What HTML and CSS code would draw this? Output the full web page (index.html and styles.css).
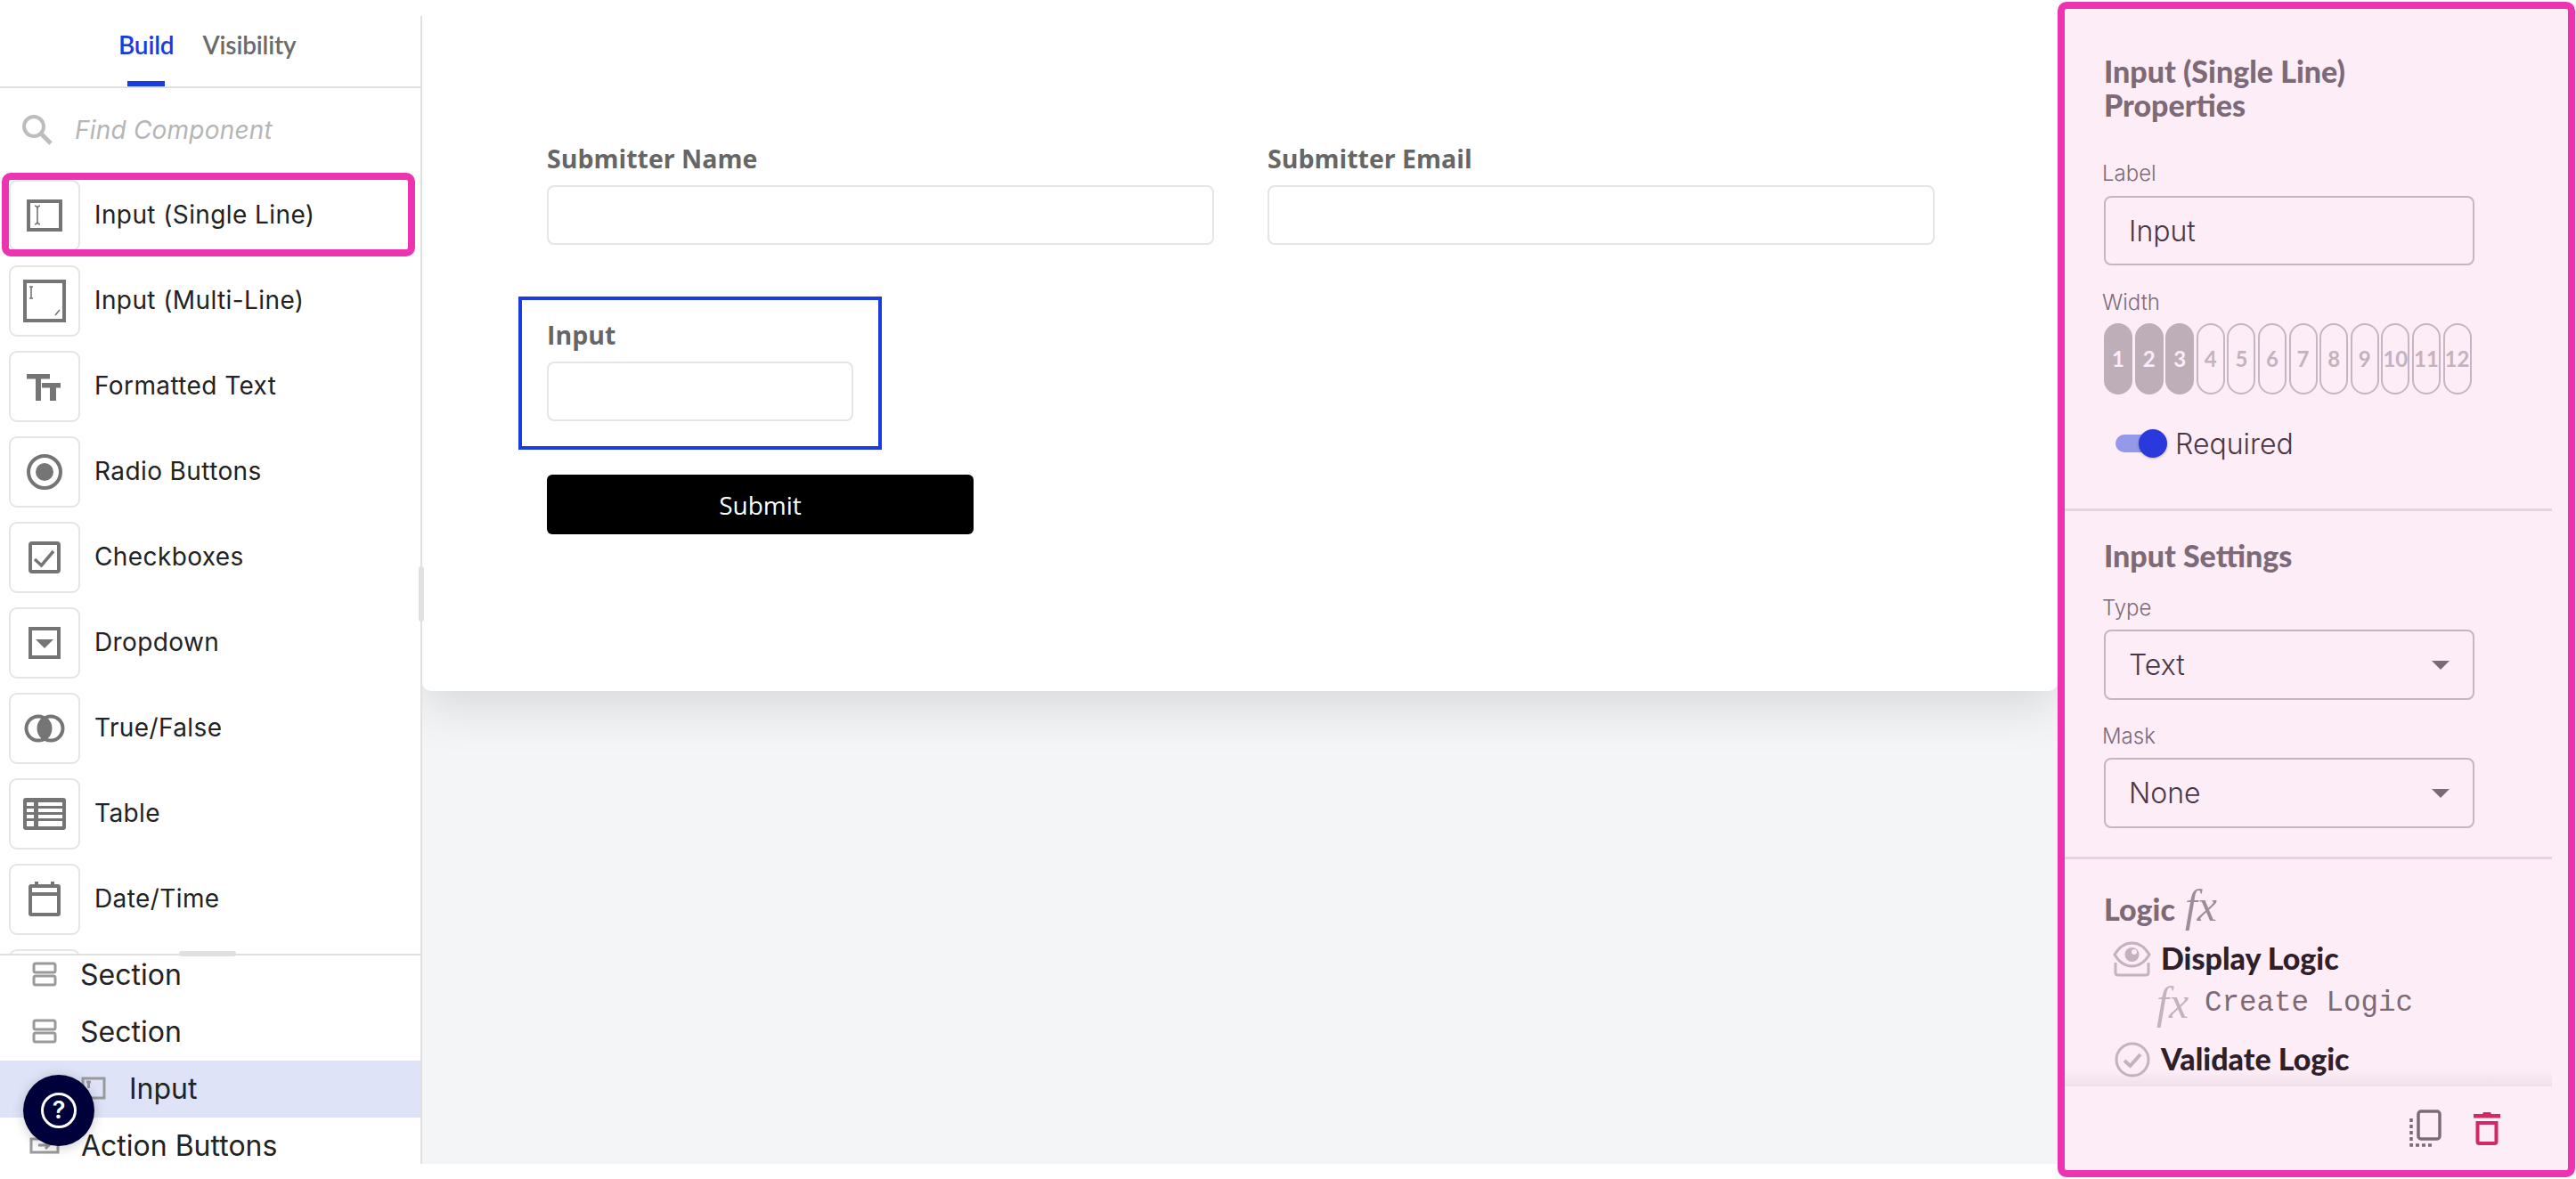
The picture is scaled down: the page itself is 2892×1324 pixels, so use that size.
FILE: index.html
```html
<!DOCTYPE html>
<html lang="en">
<head>
  <meta charset="UTF-8">
  <title>Form Builder</title>
  <link rel="stylesheet" href="styles.css">
</head>
<body>
  <div class="app">

    <!-- Left sidebar -->
    <aside class="sidebar">
      <div class="tabs">
        <a class="tab active">Build</a>
        <a class="tab">Visibility</a>
      </div>
      <div class="search">
        <svg class="search-icon" width="36" height="36" viewBox="0 0 36 36"><circle cx="14" cy="14" r="11" fill="none" stroke="#bdbdbd" stroke-width="4"/><path d="M22 22 L33 33" stroke="#bdbdbd" stroke-width="5"/></svg>
        <span class="search-text">Find Component</span>
      </div>

      <div class="components">
        <div class="component">
          <div class="icon-box"><svg viewBox="2 2 76 76"><rect x="22" y="24" width="36" height="32" class="ic-line"/><path d="M29 29 Q32 29.5 32 32 V47 Q32 49.5 29 50 M35 29 Q32 29.5 32 32 M32 47 Q32 49.5 35 50" class="ic-thin"/></svg></div>
          <span>Input (Single Line)</span>
        </div>
        <div class="component">
          <div class="icon-box"><svg viewBox="2 2 76 76"><rect x="18" y="18" width="44" height="44" class="ic-line"/><path d="M23 24 H27 M23 37 H27 M25 24 V37 M52 56 L57 50" class="ic-thin"/></svg></div>
          <span>Input (Multi-Line)</span>
        </div>
        <div class="component">
          <div class="icon-box"><svg viewBox="2 2 76 76"><path d="M20 26 H46 V31.5 H36 V56 H30 V31.5 H20 Z M37 36 H58 V41.5 H53 V56 H46 V41.5 H37 Z" class="ic-fill"/></svg></div>
          <span>Formatted Text</span>
        </div>
        <div class="component">
          <div class="icon-box"><svg viewBox="2 2 76 76"><circle cx="40" cy="40" r="18" class="ic-line"/><circle cx="40" cy="40" r="10" class="ic-fill"/></svg></div>
          <span>Radio Buttons</span>
        </div>
        <div class="component">
          <div class="icon-box"><svg viewBox="2 2 76 76"><rect x="24" y="24" width="32" height="32" rx="2" class="ic-line"/><path d="M29 42 L36.5 49 L50 33" class="ic-check"/></svg></div>
          <span>Checkboxes</span>
        </div>
        <div class="component">
          <div class="icon-box"><svg viewBox="2 2 76 76"><rect x="24" y="24" width="32" height="32" class="ic-line"/><path d="M30 36 H50 L40 46 Z" class="ic-fill"/></svg></div>
          <span>Dropdown</span>
        </div>
        <div class="component">
          <div class="icon-box"><svg viewBox="2 2 76 76"><circle cx="33" cy="40" r="13.5" class="ic-line"/><circle cx="47" cy="40" r="13.5" class="ic-line"/><path d="M40 27 A15 15 0 0 1 40 53 A15 15 0 0 1 40 27 Z" class="ic-fill"/></svg></div>
          <span>True/False</span>
        </div>
        <div class="component">
          <div class="icon-box"><svg viewBox="2 2 76 76"><rect x="16" y="22" width="48" height="36" rx="3" class="ic-fill"/><path d="M20 27 H28 V31 H20 Z M33 27 H60 V31 H33 Z M20 34 H28 V38 H20 Z M33 34 H60 V38 H33 Z M20 41 H28 V45 H20 Z M33 41 H60 V45 H33 Z M20 48 H28 V54 H20 Z M33 48 H60 V54 H33 Z" fill="#fff"/></svg></div>
          <span>Table</span>
        </div>
        <div class="component">
          <div class="icon-box"><svg viewBox="2 2 76 76"><rect x="24" y="25" width="32" height="32" rx="1" class="ic-line"/><path d="M22 34 H58 M31 20 V27 M49 20 V27" class="ic-line"/></svg></div>
          <span>Date/Time</span>
        </div>
        <div class="component">
          <div class="icon-box"></div>
        </div>
      </div>

      <!-- Layers tree -->
      <div class="layers">
        <div class="layers-inner">
          <div class="layer">
            <svg width="28" height="28" viewBox="0 0 28 28"><rect x="2" y="2" width="24" height="10" rx="2" class="ly-line"/><rect x="2" y="16" width="24" height="10" rx="2" class="ly-line"/></svg>
            <span>Section</span>
          </div>
          <div class="layer">
            <svg width="28" height="28" viewBox="0 0 28 28"><rect x="2" y="2" width="24" height="10" rx="2" class="ly-line"/><rect x="2" y="16" width="24" height="10" rx="2" class="ly-line"/></svg>
            <span>Section</span>
          </div>
          <div class="layer selected">
            <svg width="28" height="28" viewBox="0 0 28 28"><rect x="2" y="3" width="24" height="22" class="ly-line"/><path d="M6 7 H11 M8.5 7 V14" class="ly-line"/></svg>
            <span>Input</span>
          </div>
          <div class="layer">
            <svg width="34" height="28" viewBox="0 0 34 28"><rect x="2" y="7" width="30" height="15" class="ly-line"/><path d="M10 14 H22 M18 10 L22 14 L18 18" class="ly-line"/></svg>
            <span>Action Buttons</span>
          </div>
        </div>
        <div class="layers-handle"></div>
      </div>

      <div class="sidebar-scroll"></div>
    </aside>

    <!-- Canvas with the form -->
    <main class="canvas">
      <form class="card">
        <div class="form-row">
          <div class="form-field">
            <label>Submitter Name</label>
            <input type="text" class="form-input">
          </div>
          <div class="form-field">
            <label>Submitter Email</label>
            <input type="text" class="form-input">
          </div>
        </div>
        <div class="form-field active-field">
          <label>Input</label>
          <input type="text" class="form-input">
        </div>
        <button type="button" class="submit">Submit</button>
      </form>
    </main>

    <!-- Properties panel -->
    <section class="panel">
      <div class="panel-scroll">
        <div class="panel-section">
          <h2 class="panel-title">Input (Single Line)<br>Properties</h2>
          <div class="prop-label first">Label</div>
          <input type="text" class="prop-input" value="Input">
          <div class="prop-label width">Width</div>
          <div class="pills">
            <span class="pill on">1</span>
            <span class="pill on">2</span>
            <span class="pill on">3</span>
            <span class="pill">4</span>
            <span class="pill">5</span>
            <span class="pill">6</span>
            <span class="pill">7</span>
            <span class="pill">8</span>
            <span class="pill">9</span>
            <span class="pill">10</span>
            <span class="pill">11</span>
            <span class="pill">12</span>
          </div>
          <div class="toggle-row">
            <span class="toggle"><span class="toggle-thumb"></span></span>
            <span class="toggle-text">Required</span>
          </div>
        </div>

        <div class="panel-section settings">
          <h3 class="section-title">Input Settings</h3>
          <div class="prop-label type">Type</div>
          <div class="prop-select"><span>Text</span><i class="caret"></i></div>
          <div class="prop-label mask">Mask</div>
          <div class="prop-select"><span>None</span><i class="caret"></i></div>
        </div>

        <div class="panel-section logic">
          <h3 class="section-title">Logic <span class="fx fx-head">fx</span></h3>
          <div class="logic-row first-logic">
            <svg width="43" height="40" viewBox="0 0 43 40"><path d="M2 15 C8 5 14 2 21.5 2 C29 2 35 5 41 15 C35 25 29 28 21.5 28 C14 28 8 25 2 15 Z" class="lg-line"/><circle cx="21.5" cy="15" r="8" fill="#c4b2be"/><circle cx="24" cy="12" r="3" fill="#fcebf8"/><path d="M3 24 V35 Q3 38 6 38 H37 Q40 38 40 35 V24" class="lg-line"/></svg>
            <span>Display Logic</span>
          </div>
          <div class="create-row"><span class="fx fx-small">fx</span><span class="create-text">Create Logic</span></div>
          <div class="logic-row validate">
            <svg width="40" height="40" viewBox="0 0 40 40"><circle cx="20" cy="20" r="18" class="lg-line"/><path d="M11 21 L17.5 27 L29 14" class="lg-line lg-thick"/></svg>
            <span>Validate Logic</span>
          </div>
          <div class="create-row"><span class="fx fx-small">fx</span></div>
        </div>
      </div>

      <div class="panel-foot">
        <svg width="36" height="42" viewBox="0 0 36 42"><rect x="10" y="2" width="24" height="31" rx="3" fill="none" stroke="#7d6a79" stroke-width="3.5"/><path d="M2 10 V40 H28" fill="none" stroke="#7d6a79" stroke-width="3.5" stroke-dasharray="4 3"/></svg>
        <svg width="30" height="38" viewBox="0 0 30 38"><path d="M0 3 H10 L11 1 H19 L20 3 H30 V7.5 H0 Z" fill="#d02a66"/><path d="M4.5 13 H25.5 V34 Q25.5 36 23.5 36 H6.5 Q4.5 36 4.5 34 Z" fill="none" stroke="#d02a66" stroke-width="4"/></svg>
      </div>
    </section>
  </div>

  <!-- Overlays -->
  <div class="highlight"></div>
  <button class="help"><span class="help-ring">?</span></button>
</body>
</html>
```

FILE: styles.css
```css
* {
  box-sizing: border-box;
}

body {
  margin: 0;
  height: 1324px;
  overflow: hidden;
  background: #fff;
  font-family: Inter, "Liberation Sans", sans-serif;
  color: #222;
}

.app {
  display: flex;
  align-items: flex-start;
  height: 1324px;
}

/* Sidebar */
.sidebar {
  position: relative;
  display: flex;
  flex-direction: column;
  width: 474px;
  height: 1289px;
  margin-top: 18px;
  border-right: 2px solid #e0e0e0;
  background: #fff;
  z-index: 2;
}

.tabs {
  display: flex;
  justify-content: flex-start;
  gap: 32px;
  height: 81px;
  padding-left: 133px;
  border-bottom: 2px solid #e0e0e0;
}

.tab {
  position: relative;
  padding-top: 14px;
  font-family: Lato, sans-serif;
  font-size: 28px;
  font-weight: 600;
  letter-spacing: -0.15px;
  line-height: 36px;
  color: #6b6b6b;
}

.tab.active {
  color: #1a3be0;
}

.tab.active::after {
  content: "";
  position: absolute;
  left: 10px;
  right: 10px;
  bottom: 0;
  height: 6px;
  background: #1a3be0;
}

.search {
  display: flex;
  align-items: center;
  height: 95px;
  padding: 0 0 1px 24px;
}

.search-icon {
  margin-right: 24px;
}

.search-text {
  font-size: 28px;
  font-style: italic;
  letter-spacing: 0.2px;
  color: #b5b5b5;
}

.components {
  display: flex;
  flex-direction: column;
  gap: 16px;
  flex: 1;
  min-height: 0;
  padding: 8px 0 0 10px;
  overflow: hidden;
}

.component {
  display: flex;
  align-items: center;
  gap: 16px;
  flex: none;
  height: 80px;
  font-size: 28px;
  letter-spacing: 0.4px;
  color: #222;
}

.component span {
  margin-bottom: 2px;
}

.icon-box {
  flex: none;
  width: 80px;
  height: 80px;
  border: 2px solid #e5e5e5;
  border-radius: 9px;
}

.icon-box svg {
  display: block;
  width: 76px;
  height: 76px;
}

.ic-line {
  fill: none;
  stroke: #757575;
  stroke-width: 4;
}

.ic-thin {
  fill: none;
  stroke: #757575;
  stroke-width: 1.6;
}

.ic-check {
  fill: none;
  stroke: #757575;
  stroke-width: 3.5;
}

.ic-fill {
  fill: #757575;
}

.layers {
  position: relative;
  flex: none;
  height: 236px;
  border-top: 2px solid #e0e0e0;
}

.layers-inner {
  height: 100%;
  overflow: hidden;
}

.layer {
  display: flex;
  align-items: center;
  height: 64px;
  padding-left: 36px;
  padding-bottom: 2px;
  font-size: 32px;
  color: #222;
}

.layer:first-child {
  margin-top: -10px;
}

.layer svg {
  flex: none;
  margin-right: 26px;
}

.layer.selected {
  padding-left: 91px;
  background: #dfe3f7;
}

.layer:last-child {
  padding-left: 33px;
}

.layer:last-child svg {
  margin-right: 24px;
}

.ly-line {
  fill: none;
  stroke: #9a9a9a;
  stroke-width: 3;
}

.layers-handle {
  position: absolute;
  top: -5px;
  left: 201px;
  width: 64px;
  height: 6px;
  border-radius: 3px;
  background: #e0e0e0;
}

.sidebar-scroll {
  position: absolute;
  top: 618px;
  right: -4px;
  width: 6px;
  height: 62px;
  border-radius: 3px;
  background: #e0e0e0;
}

/* Canvas */
.canvas {
  flex: 1;
  height: 1307px;
  overflow: hidden;
  background: #f4f5f7;
}

.card {
  display: flex;
  flex-direction: column;
  align-items: flex-start;
  height: 776px;
  padding: 160px 0 0 140px;
  border-radius: 0 0 10px 10px;
  background: #fff;
  box-shadow: 0 14px 60px rgba(0, 0, 0, 0.13);
  font-family: "Open Sans", sans-serif;
}

.form-row {
  display: flex;
  gap: 60px;
}

.form-row .form-field {
  width: 749px;
}

.form-field label {
  display: block;
  margin-bottom: 12px;
  font-size: 28.5px;
  font-weight: 700;
  line-height: 36px;
  color: #666;
}

.form-input {
  display: block;
  width: 100%;
  height: 67px;
  border: 2px solid #e5e5e5;
  border-radius: 8px;
  background: #fff;
}

.active-field {
  width: 408px;
  margin: 58px 0 0 -32px;
  padding: 21px 28px 28px;
  border: 4px solid #1a3be0;
}

.submit {
  width: 479px;
  height: 67px;
  margin-top: 28px;
  border: none;
  border-radius: 6px;
  background: #000;
  color: #fff;
  font-family: "Open Sans", sans-serif;
  font-size: 28px;
}

/* Properties panel */
.panel {
  display: flex;
  flex-direction: column;
  flex: none;
  width: 581px;
  height: 1320px;
  margin: 2px 1px 0 0;
  border: 8px solid #ec33b0;
  border-radius: 10px;
  background: #fdedf7;
  color: #7d6a79;
  z-index: 3;
}

.panel-scroll {
  position: relative;
  flex: none;
  height: 1210px;
  margin-right: 18px;
  overflow: hidden;
}

.panel-scroll::after {
  content: "";
  position: absolute;
  left: 0;
  right: 0;
  bottom: 0;
  height: 18px;
  background: linear-gradient(rgba(125, 106, 121, 0), rgba(125, 106, 121, 0.1));
}

.panel-section {
  padding-left: 44px;
}

.panel-title,
.section-title {
  margin: 0;
  font-family: Lato, sans-serif;
  font-size: 34px;
  font-weight: 900;
  line-height: 38px;
  color: #7d6a79;
}

.panel-title {
  padding-top: 51px;
}

.prop-label {
  margin: 0 0 10px -2px;
  font-size: 24px;
  font-weight: 300;
  line-height: 30px;
  color: #7d6a79;
}

.prop-label.first {
  margin-top: 43px;
}

.prop-label.width {
  margin-top: 27px;
}

.prop-label.type {
  margin-top: 25px;
  margin-bottom: 9px;
}

.prop-label.mask {
  margin-top: 26px;
  margin-bottom: 9px;
}

.prop-input,
.prop-select {
  display: flex;
  align-items: center;
  justify-content: space-between;
  width: 416px;
  height: 78px;
  padding: 0 26px;
  border: 2.5px solid #c8b5c3;
  border-radius: 8px;
  background: transparent;
  font-family: Inter, sans-serif;
  font-size: 32px;
  font-weight: 300;
  color: #4a3645;
}

.prop-select {
  height: 79px;
  padding-right: 26px;
}

.caret {
  width: 0;
  height: 0;
  border-left: 10px solid transparent;
  border-right: 10px solid transparent;
  border-top: 10px solid #7d6a79;
}

.pills {
  display: flex;
  gap: 2.6px;
  margin-top: -2px;
}

.pill {
  display: flex;
  align-items: center;
  justify-content: center;
  width: 32px;
  height: 80px;
  padding-bottom: 2px;
  border: 2px solid #c8b5c3;
  border-radius: 16px;
  font-family: Lato, sans-serif;
  font-size: 24px;
  font-weight: 700;
  color: #c4b2be;
}

.pill.on {
  background: #bdaeb8;
  border-color: #bdaeb8;
  color: #fcebf8;
}

.toggle-row {
  display: flex;
  align-items: center;
  height: 32px;
  margin: 39px 0 57px 13px;
}

.toggle {
  position: relative;
  width: 36px;
  height: 20px;
  margin-right: 31px;
  border-radius: 10px 0 0 10px;
  background: #9499ea;
}

.toggle-thumb {
  position: absolute;
  top: -6px;
  left: 26px;
  width: 32px;
  height: 32px;
  border-radius: 50%;
  background: #2a39dc;
  box-shadow: 0 1px 3px rgba(0, 0, 0, 0.25);
}

.toggle-text {
  font-size: 32px;
  font-weight: 300;
  color: #4a3645;
}

.settings {
  padding-top: 31px;
  padding-bottom: 32px;
  border-top: 3px solid #e6d2e0;
}

.logic {
  padding-top: 37px;
  border-top: 3px solid #e6d2e0;
}

.fx {
  font-family: "Liberation Serif", serif;
  font-style: italic;
  font-weight: 400;
}

.fx-head {
  margin-left: 3px;
  font-size: 50px;
  line-height: 30px;
  color: #9d8c99;
}

.fx-small {
  width: 54px;
  font-size: 50px;
  line-height: 40px;
  color: #c4b2be;
}

.logic-row {
  display: flex;
  align-items: center;
  height: 40px;
  padding-left: 10px;
  font-family: Lato, sans-serif;
  font-size: 34px;
  font-weight: 900;
  color: #2e1f2b;
}

.logic-row span {
  margin-bottom: 3px;
}

.logic-row svg {
  flex: none;
  margin-right: 11px;
}

.first-logic {
  margin-top: 17px;
}

.validate {
  margin-top: 24px;
}

.validate svg {
  margin-left: 2px;
  margin-right: 12px;
}

.create-row {
  display: flex;
  align-items: center;
  height: 40px;
  margin-top: 9px;
  padding-left: 59px;
}

.create-text {
  font-family: "Liberation Mono", monospace;
  font-size: 32.5px;
  color: #7d6a79;
}

.lg-line {
  fill: none;
  stroke: #c4b2be;
  stroke-width: 3;
}

.lg-thick {
  stroke-width: 4;
}

.panel-foot {
  display: flex;
  align-items: center;
  justify-content: flex-end;
  gap: 36px;
  flex: 1;
  padding-right: 76px;
}

/* Overlays */
.highlight {
  position: absolute;
  top: 194px;
  left: 2px;
  width: 464px;
  height: 94px;
  border: 8px solid #ec33b0;
  border-radius: 10px;
  z-index: 4;
}

.help {
  position: absolute;
  top: 1207px;
  left: 26px;
  display: flex;
  align-items: center;
  justify-content: center;
  width: 80px;
  height: 80px;
  border: none;
  border-radius: 50%;
  background: #00003a;
  box-shadow: 0 2px 14px rgba(0, 0, 0, 0.2);
  z-index: 4;
}

.help-ring {
  width: 40px;
  height: 40px;
  border: 3px solid #fff;
  border-radius: 50%;
  font-family: Inter, sans-serif;
  font-size: 27px;
  font-weight: 600;
  line-height: 34px;
  color: #fff;
}
```
